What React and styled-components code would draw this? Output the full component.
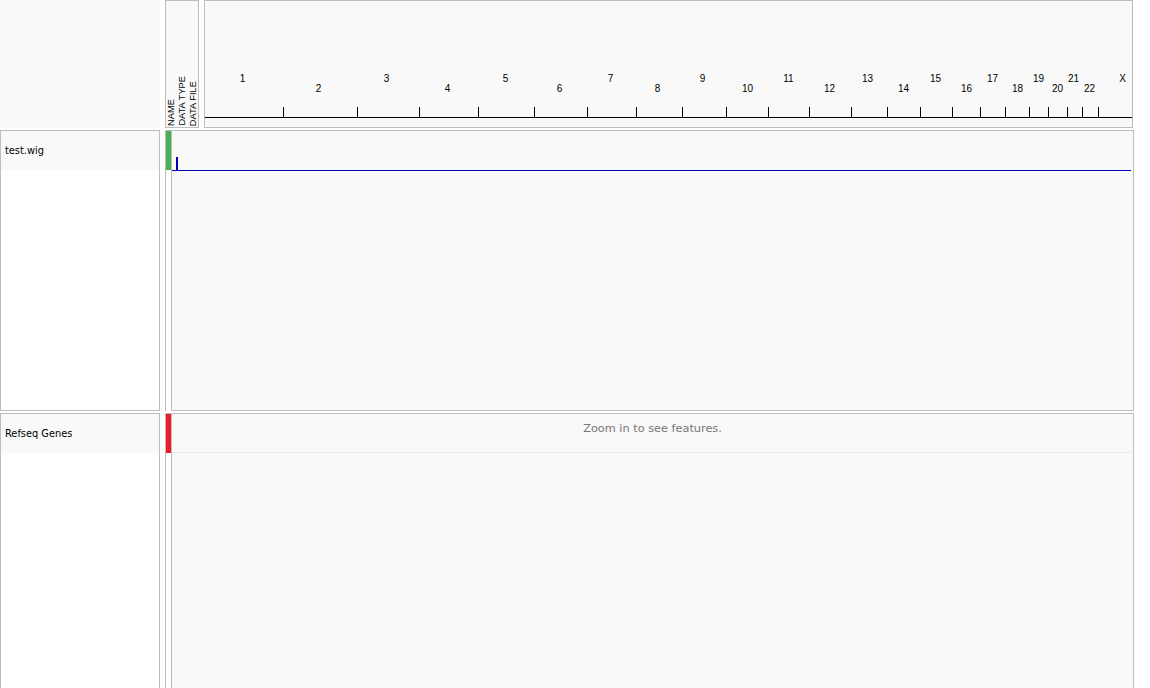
import React from "react";
import styled, { createGlobalStyle } from "styled-components";

const Global = createGlobalStyle`
  html, body { margin: 0; padding: 0; background: #fff; }
  body { font-family: "Liberation Sans", Arial, sans-serif; overflow: hidden; }
`;

const Page = styled.div`
  width: 1150px;
  height: 688px;
  display: flex;
  flex-direction: column;
  gap: 2px;
`;

const Row = styled.div`
  display: flex;
  flex-shrink: 0;
  height: ${(p) => p.$h}px;
`;

const NameHeader = styled.div`
  width: 160px;
  background: #f9f9f9;
  margin-right: 5px;
`;

const AttrHeader = styled.div`
  box-sizing: border-box;
  width: 34px;
  border: 1px solid #bdbdbd;
  background: #f9f9f9;
  display: flex;
  align-items: flex-end;
  padding: 0 0 1px 0;
  margin-right: 5px;
`;

const AttrLabel = styled.div`
  writing-mode: vertical-rl;
  transform: rotate(180deg);
  width: 11px;
  font-family: "Liberation Sans", Arial, sans-serif;
  font-size: 9.3px;
  line-height: 11px;
  color: #000;
  white-space: nowrap;
  text-align: left;
`;

const RulerBox = styled.div`
  box-sizing: border-box;
  width: 929px;
  border: 1px solid #bdbdbd;
  background: #f9f9f9;
`;

const RulerSvg = styled.svg`
  display: block;
  width: 927px;
  height: 126px;
`;

const NamePanel = styled.div`
  box-sizing: border-box;
  width: 160px;
  border: 1px solid #bdbdbd;
  background: #fff;
  margin-right: 5px;
`;

const NameLabel = styled.div`
  height: 39px;
  background: #f9f9f9;
  display: flex;
  align-items: center;
  padding-left: 4px;
  font-family: "DejaVu Sans", Verdana, sans-serif;
  font-size: 9.8px;
  color: #000;
`;

const AttrColumn = styled.div`
  box-sizing: border-box;
  width: 6px;
  border-left: 1px solid #bdbdbd;
  border-top: 1px solid #bdbdbd;
  background: #fff;
`;

const AttrSwatch = styled.div`
  width: 5px;
  height: 39px;
  background: ${(p) => p.$color};
`;

const DataPanel = styled.div`
  box-sizing: border-box;
  width: 963px;
  border: 1px solid #bdbdbd;
  background: #f9f9f9;
`;

const WigSvg = styled.svg`
  display: block;
  width: 961px;
  height: 40px;
`;

const FeatureRow = styled.div`
  height: 39px;
  border-bottom: 1px solid #ececec;
  text-align: center;
  padding-top: 8px;
  box-sizing: border-box;
  font-family: "DejaVu Sans", Verdana, sans-serif;
  font-size: 11.3px;
  line-height: 14px;
  color: #777;
`;

const ticks = [283, 357, 419, 478, 534, 587, 636, 682, 726, 768, 809, 851, 887, 920, 952, 980, 1005, 1029, 1048, 1067, 1082, 1098];
const labels = [
  ["1", 242], ["2", 318], ["3", 386], ["4", 447], ["5", 505], ["6", 559], ["7", 610], ["8", 657],
  ["9", 702], ["10", 747], ["11", 788], ["12", 829], ["13", 867], ["14", 903], ["15", 935], ["16", 966],
  ["17", 992], ["18", 1017], ["19", 1038], ["20", 1057], ["21", 1073], ["22", 1089], ["X", 1122],
];

function Ruler() {
  const ox = 205;
  const oy = 1;
  return (
    <RulerSvg viewBox="0 0 927 126">
      {labels.map(([t, x], i) => (
        <text
          key={t}
          x={x - ox + 0.5}
          y={(i % 2 === 0 ? 82 : 92) - oy}
          textAnchor="middle"
          fontFamily="Liberation Sans, Arial, sans-serif"
          fontSize="10"
          fill="#000"
        >
          {t}
        </text>
      ))}
      {ticks.map((x) => (
        <line key={x} x1={x - ox + 0.5} x2={x - ox + 0.5} y1={107 - oy} y2={117 - oy} stroke="#000" strokeWidth="1" />
      ))}
      <line x1="0" x2="927" y1={117.5 - oy} y2={117.5 - oy} stroke="#000" strokeWidth="1" />
    </RulerSvg>
  );
}

function Track({ name, color, children }) {
  return (
    <Row $h={281}>
      <NamePanel>
        <NameLabel>{name}</NameLabel>
      </NamePanel>
      <AttrColumn>
        <AttrSwatch $color={color} />
      </AttrColumn>
      <DataPanel>{children}</DataPanel>
    </Row>
  );
}

export default function App() {
  return (
    <>
      <Global />
      <Page>
        <Row $h={128}>
          <NameHeader />
          <AttrHeader>
            <AttrLabel>NAME</AttrLabel>
            <AttrLabel>DATA TYPE</AttrLabel>
            <AttrLabel>DATA FILE</AttrLabel>
          </AttrHeader>
          <RulerBox>
            <Ruler />
          </RulerBox>
        </Row>
        <Track name="test.wig" color="#4caf50">
          <WigSvg viewBox="0 0 961 40">
            <rect x="4" y="26" width="2" height="13" fill="#0000b4" />
            <line x1="0" x2="959" y1="39.5" y2="39.5" stroke="#0000b4" strokeWidth="1" />
          </WigSvg>
        </Track>
        <Track name="Refseq Genes" color="#ee1c24">
          <FeatureRow>Zoom in to see features.</FeatureRow>
        </Track>
      </Page>
    </>
  );
}
